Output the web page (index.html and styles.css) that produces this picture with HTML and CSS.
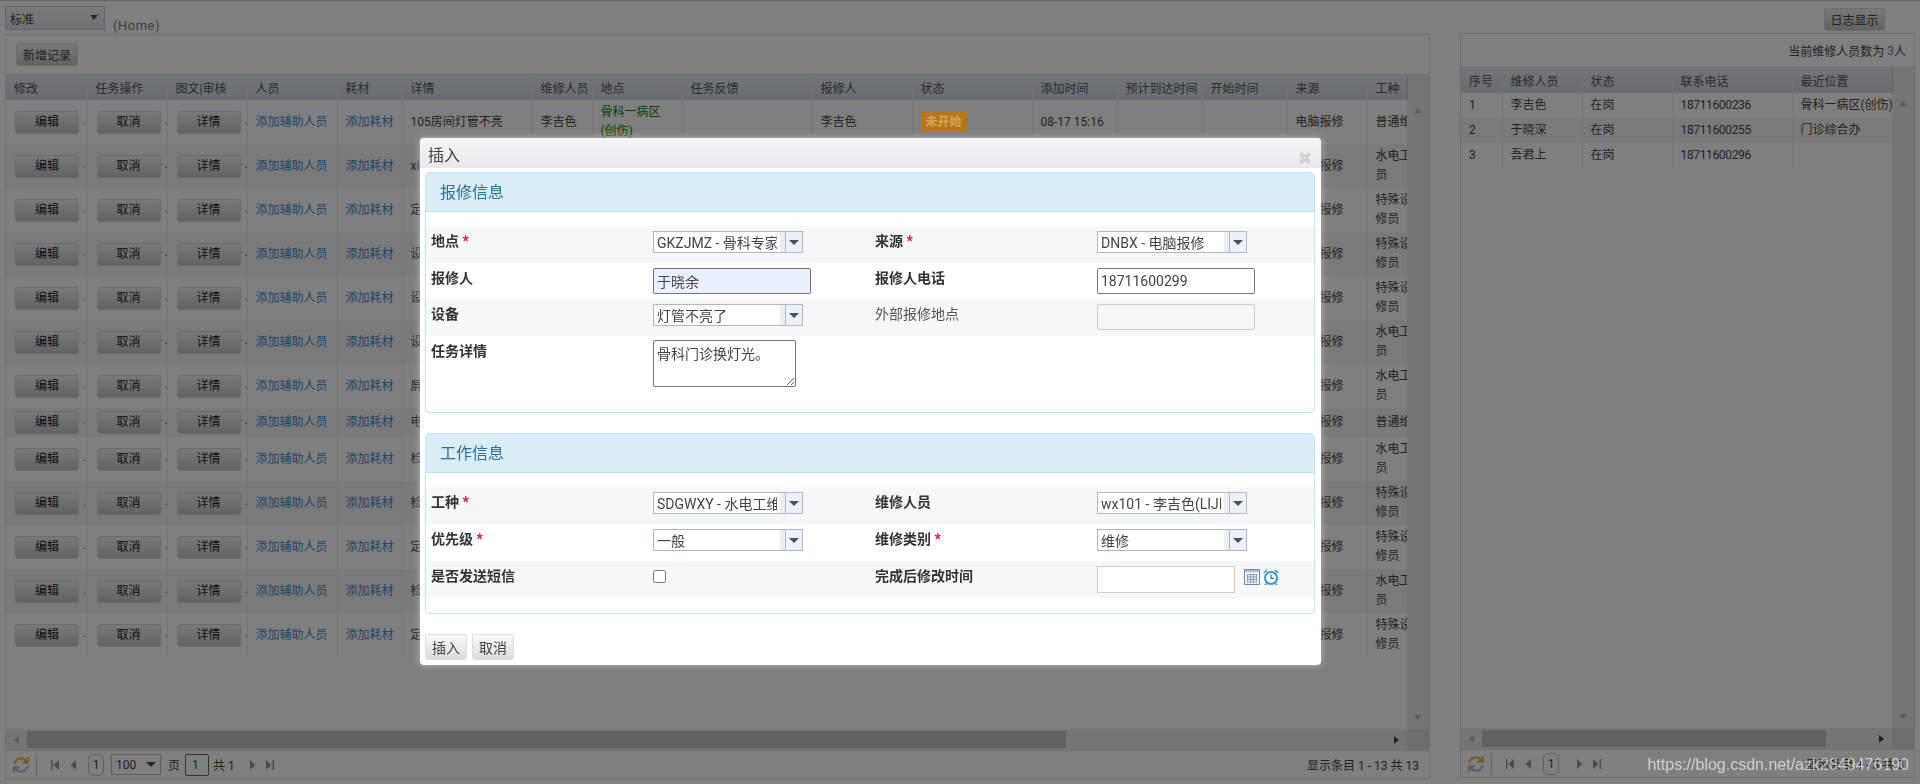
FILE: index.html
```html
<!DOCTYPE html>
<html lang="zh-CN">
<head>
    <meta charset="UTF-8">
    <title>Home</title>
    <link rel="stylesheet" href="styles.css">
</head>
<body>
    <svg class="defs" width="0" height="0">
        <symbol id="i-refresh" viewBox="0 0 16 16">
            <path d="M1.500 7A6.500 6.500 0 0 1 13 3.600L11 5.500h4.600V.9l-1.500 1.500" fill="none" stroke="#e8b93c" stroke-width="2"/>
            <path d="M14.500 9A6.500 6.500 0 0 1 3 12.400L5 10.500H.4v4.600l1.500-1.500" fill="none" stroke="#a9bccb" stroke-width="2"/>
        </symbol>
        <symbol id="i-first" viewBox="0 0 8 10"><path d="M0 0h1.500v10H0zM8 0v10L2.500 5z"/></symbol>
        <symbol id="i-prev" viewBox="0 0 8 10"><path d="M7 0v10L1.500 5z"/></symbol>
        <symbol id="i-next" viewBox="0 0 8 10"><path d="M1 0v10l5.500-5z"/></symbol>
        <symbol id="i-last" viewBox="0 0 8 10"><path d="M0 0v10l5.500-5zM6.500 0H8v10H6.500z"/></symbol>
    </svg>

    <div class="topbar">
        <div class="page-select"><span>标准</span><i class="caret"></i></div>
        <span class="home">(Home)</span>
        <button class="btn log-btn">日志显示</button>
    </div>

    <div class="panels">
        <!-- 任务列表 -->
        <div class="panel main-panel">
            <div class="toolbar"><button class="btn add-btn">新增记录</button></div>
            <div class="grid-body">
                <div class="grid-view">
                    <table class="grid main-grid">
                        <colgroup><col><col><col><col><col><col><col><col><col><col><col><col><col><col><col><col></colgroup>
                        <thead>
                            <tr><th>修改</th><th>任务操作</th><th>图文|审核</th><th>人员</th><th>耗材</th><th>详情</th><th>维修人员</th><th>地点</th><th>任务反馈</th><th>报修人</th><th>状态</th><th>添加时间</th><th>预计到达时间</th><th>开始时间</th><th>来源</th><th>工种</th></tr>
                        </thead>
                        <tbody>
                            <tr>
                                <td class="act"><button class="btn">编辑</button> .</td><td class="act"><button class="btn">取消</button> .</td><td class="act"><button class="btn">详情</button> .</td>
                                <td><a href="#">添加辅助人员</a></td><td><a href="#">添加耗材</a></td><td>105房间灯管不亮</td>
                                <td>李吉色</td><td class="place">骨科一病区(创伤)</td><td></td><td>李吉色</td><td><span class="badge">未开始</span></td><td>08-17 15:16</td><td></td><td></td>
                                <td>电脑报修</td><td>普通维修员</td>
                            </tr>
                            <tr>
                                <td class="act"><button class="btn">编辑</button> .</td><td class="act"><button class="btn">取消</button> .</td><td class="act"><button class="btn">详情</button> .</td>
                                <td><a href="#">添加辅助人员</a></td><td><a href="#">添加耗材</a></td><td>xi绘</td><td colspan="8"></td><td>电脑报修</td><td>水电工维修员</td>
                            </tr>
                            <tr>
                                <td class="act"><button class="btn">编辑</button> .</td><td class="act"><button class="btn">取消</button> .</td><td class="act"><button class="btn">详情</button> .</td>
                                <td><a href="#">添加辅助人员</a></td><td><a href="#">添加耗材</a></td><td>定期</td><td colspan="8"></td><td>电脑报修</td><td>特殊设备维修员</td>
                            </tr>
                            <tr>
                                <td class="act"><button class="btn">编辑</button> .</td><td class="act"><button class="btn">取消</button> .</td><td class="act"><button class="btn">详情</button> .</td>
                                <td><a href="#">添加辅助人员</a></td><td><a href="#">添加耗材</a></td><td>设备</td><td colspan="8"></td><td>电脑报修</td><td>特殊设备维修员</td>
                            </tr>
                            <tr>
                                <td class="act"><button class="btn">编辑</button> .</td><td class="act"><button class="btn">取消</button> .</td><td class="act"><button class="btn">详情</button> .</td>
                                <td><a href="#">添加辅助人员</a></td><td><a href="#">添加耗材</a></td><td>设备</td><td colspan="8"></td><td>电脑报修</td><td>特殊设备维修员</td>
                            </tr>
                            <tr>
                                <td class="act"><button class="btn">编辑</button> .</td><td class="act"><button class="btn">取消</button> .</td><td class="act"><button class="btn">详情</button> .</td>
                                <td><a href="#">添加辅助人员</a></td><td><a href="#">添加耗材</a></td><td>设备</td><td colspan="8"></td><td>电脑报修</td><td>水电工维修员</td>
                            </tr>
                            <tr>
                                <td class="act"><button class="btn">编辑</button> .</td><td class="act"><button class="btn">取消</button> .</td><td class="act"><button class="btn">详情</button> .</td>
                                <td><a href="#">添加辅助人员</a></td><td><a href="#">添加耗材</a></td><td>屏幕</td><td colspan="8"></td><td>电脑报修</td><td>水电工维修员</td>
                            </tr>
                            <tr>
                                <td class="act"><button class="btn">编辑</button> .</td><td class="act"><button class="btn">取消</button> .</td><td class="act"><button class="btn">详情</button> .</td>
                                <td><a href="#">添加辅助人员</a></td><td><a href="#">添加耗材</a></td><td>电脑</td><td colspan="8"></td><td>电脑报修</td><td>普通维修员</td>
                            </tr>
                            <tr>
                                <td class="act"><button class="btn">编辑</button> .</td><td class="act"><button class="btn">取消</button> .</td><td class="act"><button class="btn">详情</button> .</td>
                                <td><a href="#">添加辅助人员</a></td><td><a href="#">添加耗材</a></td><td>检修</td><td colspan="8"></td><td>电脑报修</td><td>水电工维修员</td>
                            </tr>
                            <tr>
                                <td class="act"><button class="btn">编辑</button> .</td><td class="act"><button class="btn">取消</button> .</td><td class="act"><button class="btn">详情</button> .</td>
                                <td><a href="#">添加辅助人员</a></td><td><a href="#">添加耗材</a></td><td>检修</td><td colspan="8"></td><td>电脑报修</td><td>特殊设备维修员</td>
                            </tr>
                            <tr>
                                <td class="act"><button class="btn">编辑</button> .</td><td class="act"><button class="btn">取消</button> .</td><td class="act"><button class="btn">详情</button> .</td>
                                <td><a href="#">添加辅助人员</a></td><td><a href="#">添加耗材</a></td><td>定期</td><td colspan="8"></td><td>电脑报修</td><td>特殊设备维修员</td>
                            </tr>
                            <tr>
                                <td class="act"><button class="btn">编辑</button> .</td><td class="act"><button class="btn">取消</button> .</td><td class="act"><button class="btn">详情</button> .</td>
                                <td><a href="#">添加辅助人员</a></td><td><a href="#">添加耗材</a></td><td>检修</td><td colspan="8"></td><td>电脑报修</td><td>水电工维修员</td>
                            </tr>
                            <tr>
                                <td class="act"><button class="btn">编辑</button> .</td><td class="act"><button class="btn">取消</button> .</td><td class="act"><button class="btn">详情</button> .</td>
                                <td><a href="#">添加辅助人员</a></td><td><a href="#">添加耗材</a></td><td>定期</td><td colspan="8"></td><td>电脑报修</td><td>特殊设备维修员</td>
                            </tr>
                        </tbody>
                    </table>
                </div>
                <div class="vscroll">
                    <div class="vscroll-head"></div>
                    <i class="tri tri-up"></i>
                    <i class="tri tri-down"></i>
                </div>
            </div>
            <div class="hscroll">
                <i class="tri tri-left"></i>
                <div class="thumb main-thumb"></div>
                <i class="tri tri-right"></i>
                <div class="corner"></div>
            </div>
            <div class="pager">
                <svg class="refresh"><use href="#i-refresh"/></svg>
                <span class="sep"></span>
                <svg class="nav first"><use href="#i-first"/></svg>
                <svg class="nav prev"><use href="#i-prev"/></svg>
                <span class="pill">1</span>
                <div class="size-select"><span>100</span><i class="caret"></i></div>
                <span class="pg-word">页</span>
                <span class="pg-input">1</span>
                <span class="pg-total">共 1</span>
                <svg class="nav next"><use href="#i-next"/></svg>
                <svg class="nav last"><use href="#i-last"/></svg>
                <span class="pg-info">显示条目 1 - 13 共 13</span>
            </div>
        </div>

        <!-- 维修人员列表 -->
        <div class="panel side-panel">
            <div class="toolbar side-toolbar">当前维修人员数为&nbsp;<span class="count">3</span>人</div>
            <div class="grid-body">
                <div class="grid-view">
                    <table class="grid side-grid">
                        <colgroup><col><col><col><col><col></colgroup>
                        <thead>
                            <tr><th>序号</th><th>维修人员</th><th>状态</th><th>联系电话</th><th>最近位置</th></tr>
                        </thead>
                        <tbody>
                            <tr><td>1</td><td>李吉色</td><td>在岗</td><td class="num">18711600236</td><td>骨科一病区(创伤)</td></tr>
                            <tr><td>2</td><td>于晓深</td><td>在岗</td><td class="num">18711600255</td><td>门诊综合办</td></tr>
                            <tr><td>3</td><td>吾君上</td><td>在岗</td><td class="num">18711600296</td><td></td></tr>
                        </tbody>
                    </table>
                </div>
                <div class="vscroll">
                    <div class="vscroll-head"></div>
                    <i class="tri tri-up"></i>
                    <i class="tri tri-down"></i>
                </div>
            </div>
            <div class="hscroll">
                <i class="tri tri-left"></i>
                <div class="thumb side-thumb"></div>
                <i class="tri tri-right"></i>
                <div class="corner"></div>
            </div>
            <div class="pager">
                <svg class="refresh"><use href="#i-refresh"/></svg>
                <span class="sep"></span>
                <svg class="nav first"><use href="#i-first"/></svg>
                <svg class="nav prev"><use href="#i-prev"/></svg>
                <span class="pill">1</span>
                <svg class="nav next side-next"><use href="#i-next"/></svg>
                <svg class="nav last"><use href="#i-last"/></svg>
                <span class="pg-info">显示条目 1 - 3 共 3</span>
            </div>
        </div>
    </div>

    <div class="overlay"></div>

    <!-- 插入窗口 -->
    <div class="modal">
        <div class="modal-title">
            <span>插入</span>
            <svg class="close" viewBox="0 0 12 12"><path d="M1.500 1.500l9 9M10.500 1.500l-9 9" fill="none" stroke="#a4a4a4" stroke-width="3"/><path d="M1.500 1.500l9 9M10.500 1.500l-9 9" fill="none" stroke="#f4f4f4" stroke-width="1.200"/></svg>
        </div>

        <div class="section">
            <div class="section-head">报修信息</div>
            <div class="section-body">
                <div class="f-row">
                    <label>地点 <em>*</em></label>
                    <div class="f-cell"><div class="combo"><span class="combo-text">GKZJMZ - 骨科专家门诊</span><i class="combo-strip"></i><span class="combo-btn"><i class="caret"></i></span></div></div>
                    <label>来源 <em>*</em></label>
                    <div class="f-cell"><div class="combo"><span class="combo-text">DNBX - 电脑报修</span><i class="combo-strip"></i><span class="combo-btn"><i class="caret"></i></span></div></div>
                </div>
                <div class="f-row short">
                    <label>报修人</label>
                    <div class="f-cell"><input class="txt autofilled" type="text" value="于晓余"></div>
                    <label>报修人电话</label>
                    <div class="f-cell"><input class="txt" type="text" value="18711600299"></div>
                </div>
                <div class="f-row">
                    <label>设备</label>
                    <div class="f-cell"><div class="combo"><span class="combo-text">灯管不亮了</span><i class="combo-strip"></i><span class="combo-btn"><i class="caret"></i></span></div></div>
                    <label class="plain">外部报修地点</label>
                    <div class="f-cell"><input class="txt" type="text" disabled></div>
                </div>
                <div class="f-row tall">
                    <label>任务详情</label>
                    <div class="f-cell"><textarea class="area">骨科门诊换灯光。</textarea></div>
                    <label></label>
                    <div class="f-cell"></div>
                </div>
            </div>
        </div>

        <div class="section">
            <div class="section-head">工作信息</div>
            <div class="section-body">
                <div class="f-row">
                    <label>工种 <em>*</em></label>
                    <div class="f-cell"><div class="combo"><span class="combo-text">SDGWXY - 水电工维修员</span><i class="combo-strip"></i><span class="combo-btn"><i class="caret"></i></span></div></div>
                    <label>维修人员</label>
                    <div class="f-cell"><div class="combo"><span class="combo-text">wx101 - 李吉色(LIJISE)</span><i class="combo-strip"></i><span class="combo-btn"><i class="caret"></i></span></div></div>
                </div>
                <div class="f-row">
                    <label>优先级 <em>*</em></label>
                    <div class="f-cell"><div class="combo"><span class="combo-text">一般</span><i class="combo-strip"></i><span class="combo-btn"><i class="caret"></i></span></div></div>
                    <label>维修类别 <em>*</em></label>
                    <div class="f-cell"><div class="combo"><span class="combo-text">维修</span><i class="combo-strip"></i><span class="combo-btn"><i class="caret"></i></span></div></div>
                </div>
                <div class="f-row">
                    <label>是否发送短信</label>
                    <div class="f-cell"><input class="check" type="checkbox"></div>
                    <label>完成后修改时间</label>
                    <div class="f-cell date-cell">
                        <input class="txt date" type="text">
                        <svg class="pick-icon" viewBox="0 0 16 16"><path d="M.5 .5h15v15H.5z" fill="#eaf0f6" stroke="#6f8ca6"/><path d="M1 1h14v2H1z" fill="#a9bfd2"/><path d="M3 5.500h10M3 8h10M3 10.500h10M3 13h10M3.500 5v8.500M6.500 5v8.500M9.500 5v8.500M12.500 5v8.500" fill="none" stroke="#8aa3b9"/></svg>
                        <svg class="pick-icon clock" viewBox="0 0 16 16"><circle cx="8" cy="9" r="6" fill="#f4fbff" stroke="#3f95bf" stroke-width="2"/><path d="M8 5.500V9.500h3" fill="none" stroke="#33708f" stroke-width="1.200"/><path d="M.8 4L4 1M15.200 4L12 1M3.500 14.500l-1.500 1.500M12.500 14.500l1.500 1.500" fill="none" stroke="#3f95bf" stroke-width="1.600"/></svg>
                    </div>
                </div>
            </div>
        </div>

        <div class="modal-buttons">
            <button class="modal-btn">插入</button>
            <button class="modal-btn">取消</button>
        </div>
    </div>

    <div class="watermark">https://blog.csdn.net/azk2849476190</div>
</body>
</html>
```

FILE: styles.css
```css
html, body {
    margin: 0;
    height: 784px;
    overflow: hidden;
}
body {
    font-family: Roboto, "Noto Sans CJK SC", sans-serif;
    font-size: 12px;
    color: #444;
    background-color: #fff;
    border-top: 1px solid #ccc;
    box-sizing: border-box;
}
.defs {
    position: absolute;
}
.caret {
    display: block;
    width: 0;
    height: 0;
    border-left: 5px solid transparent;
    border-right: 5px solid transparent;
    border-top: 5px solid #3f5468;
}

/* oben */
.topbar {
    height: 32px;
    box-sizing: border-box;
    padding: 5px 35px 0 5px;
    display: flex;
    align-items: flex-start;
}
.page-select {
    width: 100px;
    height: 24px;
    box-sizing: border-box;
    border: 1px solid #bccdde;
    background: linear-gradient(#f4f4f4, #e2e2e2);
    display: flex;
    align-items: center;
    justify-content: space-between;
    padding: 0 6px 0 4px;
}
.page-select .caret {
    margin-bottom: 2px;
    border-left-width: 4px;
    border-right-width: 4px;
}
.home {
    margin: 11px 0 0 8px;
    font-size: 13px;
    letter-spacing: 0.5px;
    line-height: 18px;
    color: #777;
}
.btn {
    height: 23px;
    width: 64px;
    padding: 0;
    margin: 0 1px;
    vertical-align: top;
    font: inherit;
    color: #222;
    background: linear-gradient(#f2f2f2, #c6c6c6);
    border: 1px solid #d6d6d6;
    border-radius: 3px;
}
.log-btn {
    width: 61px;
    margin: 2px 0 0 auto;
    color: #444;
}
.add-btn {
    width: 62px;
    margin: 0;
    color: #444;
}

/* panels */
.panels {
    display: flex;
    gap: 30px;
    padding-left: 5px;
}
.panel {
    height: 745px;
    box-sizing: border-box;
    border: 1px solid #ddd;
    display: flex;
    flex-direction: column;
}
.main-panel {
    width: 1425px;
    margin-top: 1px;
}
.side-panel {
    width: 455px;
}
.toolbar {
    height: 40px;
    box-sizing: border-box;
    border-bottom: 1px solid #ddd;
    display: flex;
    align-items: center;
    padding-left: 10px;
}
.side-toolbar {
    height: 34px;
    justify-content: flex-end;
    padding: 0 8px 0 0;
}
.count {
    color: #428bca;
}
.grid-body {
    flex: 1;
    min-height: 0;
    display: flex;
}
.grid-view {
    flex: 1;
    min-width: 0;
    overflow: hidden;
}
.grid {
    border-collapse: collapse;
    table-layout: fixed;
}
.main-grid {
    width: 1441px;
}
.side-grid {
    width: 441px;
}
.main-grid col:nth-child(1) { width: 81px; }
.main-grid col:nth-child(2) { width: 80px; }
.main-grid col:nth-child(3) { width: 80px; }
.main-grid col:nth-child(4) { width: 90px; }
.main-grid col:nth-child(5) { width: 65px; }
.main-grid col:nth-child(6) { width: 130px; }
.main-grid col:nth-child(7) { width: 60px; }
.main-grid col:nth-child(8) { width: 90px; }
.main-grid col:nth-child(9) { width: 130px; }
.main-grid col:nth-child(10) { width: 100px; }
.main-grid col:nth-child(11) { width: 120px; }
.main-grid col:nth-child(12) { width: 85px; }
.main-grid col:nth-child(13) { width: 85px; }
.main-grid col:nth-child(14) { width: 85px; }
.main-grid col:nth-child(15) { width: 80px; }
.main-grid col:nth-child(16) { width: 80px; }
.side-grid col:nth-child(1) { width: 41px; }
.side-grid col:nth-child(2) { width: 80px; }
.side-grid col:nth-child(3) { width: 90px; }
.side-grid col:nth-child(4) { width: 120px; }
.side-grid col:nth-child(5) { width: 110px; }
.grid th {
    height: 25px;
    padding: 0 8px;
    box-sizing: border-box;
    font-weight: normal;
    text-align: left;
    white-space: nowrap;
    overflow: hidden;
    color: #555;
    background: linear-gradient(#e6ebf1, #d3d9e0);
    border-right: 1px solid #e6e6e6;
}
.grid td {
    padding: 3px 8px;
    line-height: 19px;
    border-right: 1px solid #ececec;
    vertical-align: middle;
}
.grid tbody tr:nth-child(even) td {
    background-color: #f5f5f5;
}
.side-grid td {
    white-space: nowrap;
    overflow: hidden;
}
.grid td.num {
    letter-spacing: -0.35px;
}
.grid td.act {
    white-space: nowrap;
    color: #b06a20;
    overflow: visible;
}
.grid a {
    color: #428bca;
    text-decoration: none;
}
.place {
    color: #0a8a0a;
}
.badge {
    position: relative;
    z-index: 11;
    display: inline-block;
    padding: 0 5px;
    line-height: 20px;
    border-radius: 2px;
    font-weight: bold;
    color: #d9a657;
    background-color: #b5761e;
}
.vscroll {
    width: 22px;
    background-color: #ebebeb;
    display: flex;
    flex-direction: column;
    align-items: center;
}
.vscroll-head {
    align-self: stretch;
    height: 25px;
    border-left: 1px solid #c0cad6;
}
.tri {
    display: block;
    width: 0;
    height: 0;
    flex: none;
}
.tri-up {
    margin-top: 8px;
    border-left: 4px solid transparent;
    border-right: 4px solid transparent;
    border-bottom: 5px solid #b8b8b8;
}
.tri-down {
    margin-top: auto;
    margin-bottom: 9px;
    border-left: 4px solid transparent;
    border-right: 4px solid transparent;
    border-top: 5px solid #b8b8b8;
}
.hscroll {
    flex: none;
    height: 22px;
    box-sizing: border-box;
    border-bottom: 1px solid #ddd;
    background-color: #ebebeb;
    display: flex;
    align-items: center;
}
.tri-left {
    margin: 0 8px 0 8px;
    border-top: 4px solid transparent;
    border-bottom: 4px solid transparent;
    border-right: 5px solid #b8b8b8;
}
.tri-right {
    margin: 0 8px 0 auto;
    border-top: 4px solid transparent;
    border-bottom: 4px solid transparent;
    border-left: 5px solid #444;
}
.thumb {
    height: 17px;
    background-color: #c4c4c4;
}
.main-thumb {
    width: 1039px;
}
.side-thumb {
    width: 344px;
}
.corner {
    width: 22px;
    align-self: stretch;
    background-color: #dcdcdc;
}

/* pager */
.pager {
    flex: none;
    height: 27px;
    display: flex;
    align-items: center;
    padding: 0 10px 0 7px;
    color: #444;
}
.refresh {
    width: 16px;
    height: 16px;
    flex: none;
}
.sep {
    width: 1px;
    height: 22px;
    margin: 0 14px 0 7px;
    background-color: #ccc;
}
.nav {
    width: 8px;
    height: 10px;
    flex: none;
    fill: #999;
}
.prev {
    margin-left: 10px;
}
.pill {
    width: 16px;
    height: 22px;
    box-sizing: border-box;
    margin: 0 7px 0 11px;
    border: 1px solid #b4c4d4;
    border-radius: 5px;
    text-align: center;
    line-height: 20px;
}
.size-select {
    width: 50px;
    height: 21px;
    box-sizing: border-box;
    border: 1px solid #b4c4d4;
    display: flex;
    align-items: center;
    justify-content: space-between;
    padding: 0 4px;
}
.pg-word {
    margin-left: 7px;
}
.pg-input {
    width: 24px;
    height: 22px;
    box-sizing: border-box;
    margin-left: 5px;
    padding-left: 6px;
    border: 1px solid #666;
    border-radius: 2px;
    line-height: 20px;
}
.pg-total {
    margin: 0 14px 0 4px;
}
.last {
    margin-left: 9px;
}
.side-next {
    margin-left: 10px;
}
.pg-info {
    margin-left: auto;
}

.overlay {
    position: fixed;
    top: 0;
    left: 0;
    width: 100%;
    height: 100%;
    background-color: rgba(0, 0, 0, 0.5);
    z-index: 10;
}

/* modal */
.modal {
    position: fixed;
    top: 138px;
    left: 420px;
    z-index: 12;
    width: 901px;
    height: 527px;
    box-sizing: border-box;
    padding: 0 6px 0 5px;
    background-color: #fff;
    border-radius: 4px;
    box-shadow: 0 0 7px rgba(210, 210, 210, 0.75);
    font-size: 14px;
    color: #444;
}
.modal-title {
    height: 30px;
    margin: 0 -6px 4px -5px;
    padding: 5px 8px 0;
    box-sizing: border-box;
    display: flex;
    justify-content: space-between;
    align-items: center;
    font-size: 16px;
    line-height: 22px;
    background: linear-gradient(#f6f6f6, #e7e8ec);
    border-radius: 4px 4px 0 0;
}
.close {
    width: 12px;
    height: 12px;
    margin: 5px 2px 0 0;
}
.section {
    border: 1px solid #bce8f1;
    border-radius: 4px;
    margin-bottom: 20px;
}
.section-head {
    height: 39px;
    box-sizing: border-box;
    padding: 1px 14px 0;
    font-size: 16px;
    line-height: 38px;
    color: #31708f;
    background-color: #d9edf7;
    border-bottom: 1px solid #bce8f1;
    border-radius: 3px 3px 0 0;
}
.section-body {
    padding: 14px 0 15px;
}
.f-row {
    height: 37px;
    display: grid;
    grid-template-columns: repeat(4, 222px);
}
.f-row:nth-child(odd) {
    background-color: #f7f7f7;
}
.f-row.short {
    height: 36px;
}
.f-row.tall {
    height: 61px;
}
.f-row label {
    padding: 5px;
    line-height: 20px;
    font-weight: bold;
    color: #333;
}
.f-row label.plain {
    font-weight: normal;
    color: #555;
}
.f-row em {
    font-style: normal;
    color: #e5004f;
}
.f-cell {
    padding: 5px;
}
.combo {
    width: 150px;
    height: 22px;
    box-sizing: border-box;
    border: 1px solid #a9bccb;
    background-color: #fff;
    display: flex;
    line-height: 22px;
}
.combo-text {
    width: 120px;
    margin: 0 3px;
    overflow: hidden;
    white-space: nowrap;
}
.combo-strip {
    width: 5px;
    background-color: #eee;
}
.combo-btn {
    flex: 1;
    border-left: 1px solid #a9bccb;
    background-color: #edf1f5;
    display: flex;
    align-items: center;
    justify-content: center;
}
.txt {
    width: 158px;
    height: 26px;
    box-sizing: border-box;
    padding: 0 3px;
    font: inherit;
    color: #444;
    background-color: #fff;
    border: 1px solid #767676;
    border-radius: 2px;
    display: block;
}
.autofilled {
    background-color: #e8f0fe;
}
.txt:disabled {
    background-color: #f6f6f6;
    border-color: #ccc;
}
.area {
    width: 143px;
    height: 47px;
    box-sizing: border-box;
    margin: -1px 0 0;
    padding: 2px 3px;
    font: inherit;
    color: #444;
    border: 1px solid #767676;
    border-radius: 2px;
    display: block;
}
.check {
    width: 13px;
    height: 13px;
    margin: 4px 0 0;
    display: block;
}
.date-cell {
    display: flex;
    align-items: flex-start;
}
.date {
    width: 138px;
    height: 27px;
    border-color: #ccc;
    border-radius: 0;
}
.pick-icon {
    width: 16px;
    height: 16px;
    margin: 3px 0 0 9px;
}
.pick-icon.clock {
    margin-left: 3px;
}
.modal-buttons {
    display: flex;
    gap: 5px;
}
.modal-btn {
    width: 42px;
    height: 26px;
    padding: 0;
    font: inherit;
    color: #444;
    background: linear-gradient(#fafafa, #dcdcdc);
    border: 1px solid #ddd;
    border-radius: 3px;
}
.watermark {
    position: fixed;
    right: 11px;
    top: 755px;
    z-index: 13;
    font-family: "Liberation Sans", Arial, sans-serif;
    font-size: 16px;
    line-height: 20px;
    color: rgba(255, 255, 255, 0.62);
}
```
